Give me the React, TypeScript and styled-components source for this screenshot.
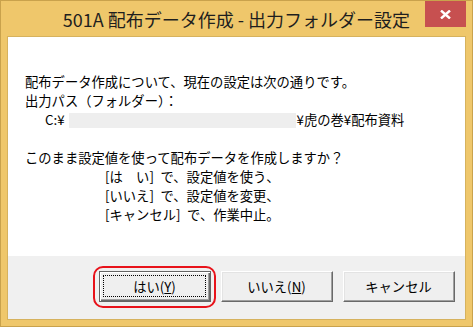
import styled, { createGlobalStyle, css } from "styled-components";

const GlobalStyle = createGlobalStyle`
  html, body {
    margin: 0;
    padding: 0;
    background: #ffffff;
  }
  body {
    font-family: "Noto Sans CJK JP", "Noto Sans", sans-serif;
  }
`;

const Window = styled.div`
  box-sizing: border-box;
  width: 473px;
  height: 327px;
  display: flex;
  flex-direction: column;
  padding: 0 6px 6px;
  background: #efc76b;
  border: 1px solid #c9a24c;
`;

const TitleBar = styled.div`
  flex-shrink: 0;
  height: 35px;
  display: grid;
  grid-template-columns: 1fr auto 1fr;
  align-items: start;
`;

const Title = styled.div`
  grid-column: 2;
  padding-top: 6px;
  font-size: 18px;
  line-height: 24px;
  color: #1e1e1e;
  white-space: nowrap;
`;

const CloseButton = styled.button`
  grid-column: 3;
  justify-self: end;
  width: 41px;
  height: 26px;
  padding: 0;
  border: none;
  background: #c75050;
  display: flex;
  align-items: center;
  justify-content: center;
`;

const Client = styled.div`
  flex: 1;
  min-height: 0;
  display: flex;
  flex-direction: column;
  border: 1px solid #d6b25e;
`;

const Body = styled.div`
  flex: 1;
  background: #ffffff;
  padding: 35px 0 0 17px;
  font-size: 13.3px;
  line-height: 19px;
  color: #000;
`;

const Line = styled.div<{ $indent?: number }>`
  min-height: 19px;
  padding-left: ${(p) => p.$indent ?? 0}px;
  white-space: pre;
`;

const Redacted = styled.span`
  display: inline-block;
  width: 227px;
  height: 15px;
  margin: 0 1px 0 4px;
  background: #eeeeee;
  vertical-align: -3px;
`;

const Footer = styled.div`
  box-sizing: border-box;
  flex-shrink: 0;
  height: 63px;
  background: #f0f0f0;
  display: flex;
  justify-content: flex-end;
  align-items: flex-start;
  gap: 10px;
  padding: 15px 10px 0 0;
`;

const Highlight = styled.div`
  position: relative;

  &::after {
    content: "";
    position: absolute;
    inset: -5px -5px -6px -6px;
    border: 2px solid #e8121a;
    border-radius: 10px;
    pointer-events: none;
  }
`;

const Button = styled.button<{ $default?: boolean }>`
  box-sizing: border-box;
  width: 112px;
  height: 31px;
  padding: 0;
  display: flex;
  font-family: inherit;
  font-size: 13.3px;
  color: #000;
  background: #efefef;
  border: 1px solid;
  border-color: #ffffff #696969 #696969 #ffffff;
  box-shadow: inset -1px -1px #a0a0a0, inset 1px 1px #e3e3e3;

  ${(p) =>
    p.$default &&
    css`
      border-color: #646464;
      box-shadow: inset 1px 1px #ffffff, inset -1px -1px #696969,
        inset -2px -2px #a0a0a0;
    `}
`;

const Label = styled.span<{ $focus?: boolean }>`
  flex: 1;
  margin: 3px 4px 4px 3px;
  display: flex;
  align-items: center;
  justify-content: center;
  border: 1px dotted ${(p) => (p.$focus ? "#000" : "transparent")};
`;

const Key = styled.span`
  text-decoration: underline;
`;

export default function App() {
  return (
    <>
      <GlobalStyle />
      <Window>
        <TitleBar>
          <Title>501A 配布データ作成 - 出力フォルダー設定</Title>
          <CloseButton aria-label="閉じる">
            <svg width="11" height="9" viewBox="0 0 11 9">
              <path d="M1 0.5 L10 8.5 M10 0.5 L1 8.5" stroke="#fff" strokeWidth="2.4" fill="none" />
            </svg>
          </CloseButton>
        </TitleBar>
        <Client>
          <Body>
            <Line>配布データ作成について、現在の設定は次の通りです。</Line>
            <Line>出力パス（フォルダー）：</Line>
            <Line $indent={20}>
              C:¥<Redacted />¥虎の巻¥配布資料
            </Line>
            <Line />
            <Line>このまま設定値を使って配布データを作成しますか？</Line>
            <Line $indent={80}>{"[は　い]\u2002で、設定値を使う、"}</Line>
            <Line $indent={80}>{"[いいえ]\u2002で、設定値を変更、"}</Line>
            <Line $indent={80}>{"[キャンセル]\u2002で、作業中止。"}</Line>
          </Body>
          <Footer>
            <Highlight>
              <Button $default>
                <Label $focus>
                  はい(<Key>Y</Key>)
                </Label>
              </Button>
            </Highlight>
            <Button>
              <Label>
                いいえ(<Key>N</Key>)
              </Label>
            </Button>
            <Button>
              <Label>キャンセル</Label>
            </Button>
          </Footer>
        </Client>
      </Window>
    </>
  );
}
